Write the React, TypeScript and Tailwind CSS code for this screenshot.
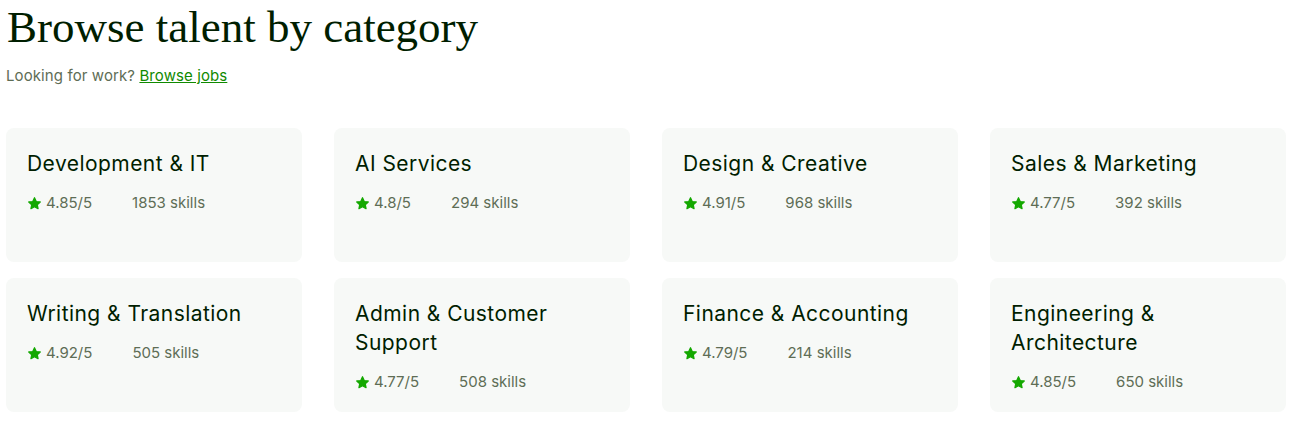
import React from "react";

type Category = {
  title: string;
  rating: string;
  skills: string;
};

const categories: Category[] = [
  { title: "Development & IT", rating: "4.85/5", skills: "1853 skills" },
  { title: "AI Services", rating: "4.8/5", skills: "294 skills" },
  { title: "Design & Creative", rating: "4.91/5", skills: "968 skills" },
  { title: "Sales & Marketing", rating: "4.77/5", skills: "392 skills" },
  { title: "Writing & Translation", rating: "4.92/5", skills: "505 skills" },
  { title: "Admin & Customer Support", rating: "4.77/5", skills: "508 skills" },
  { title: "Finance & Accounting", rating: "4.79/5", skills: "214 skills" },
  { title: "Engineering & Architecture", rating: "4.85/5", skills: "650 skills" },
];

// small rounded star used next to the rating
const Star = () => (
  <svg width="15" height="15" viewBox="0 0 24 24" className="shrink-0">
    <path
      d="M12 2.8l2.8 6 6.4.7-4.8 4.4 1.3 6.4L12 17.1l-5.7 3.2 1.3-6.4-4.8-4.4 6.4-.7z"
      fill="#14a800"
      stroke="#14a800"
      strokeWidth="2"
      strokeLinejoin="round"
    />
  </svg>
);

const CategoryCard = ({ category }: { category: Category }) => {
  return (
    <a className="h-[134px] rounded-lg bg-[#f7f9f7] pl-[21px] pr-5 pt-[21px] flex flex-col cursor-pointer">
      <h4 className="text-[21px] leading-[29px] tracking-[0.45px] text-[#001e00]">
        {category.title}
      </h4>
      <div className="mt-[14px] flex flex-row items-center text-[15px] leading-[22px] text-[#5e6d55]">
        <span className="flex flex-row items-center gap-1">
          <Star />
          {category.rating}
        </span>
        <span className="ml-10">{category.skills}</span>
      </div>
    </a>
  );
};

const App = () => {
  return (
    <div
      className="w-full bg-white pl-[6px] pr-[8px] pb-2"
      style={{ fontFamily: "Inter, 'Liberation Sans', sans-serif" }}
    >
      <h2
        className="text-[45px] leading-[54px] text-[#001e00] pl-[1px]"
        style={{ fontFamily: "'Liberation Serif', serif" }}
      >
        Browse talent by category
      </h2>
      <p className="mt-[11px] text-[15px] leading-[22px] tracking-[0.1px] text-[#5e6d55]">
        Looking for work?{" "}
        <a className="text-[#108a00] underline cursor-pointer">Browse jobs</a>
      </p>
      <div className="mt-[41px] grid grid-cols-4 gap-x-8 gap-y-4">
        {categories.map((category, index) => (
          <CategoryCard key={index} category={category} />
        ))}
      </div>
    </div>
  );
};

export default App;
